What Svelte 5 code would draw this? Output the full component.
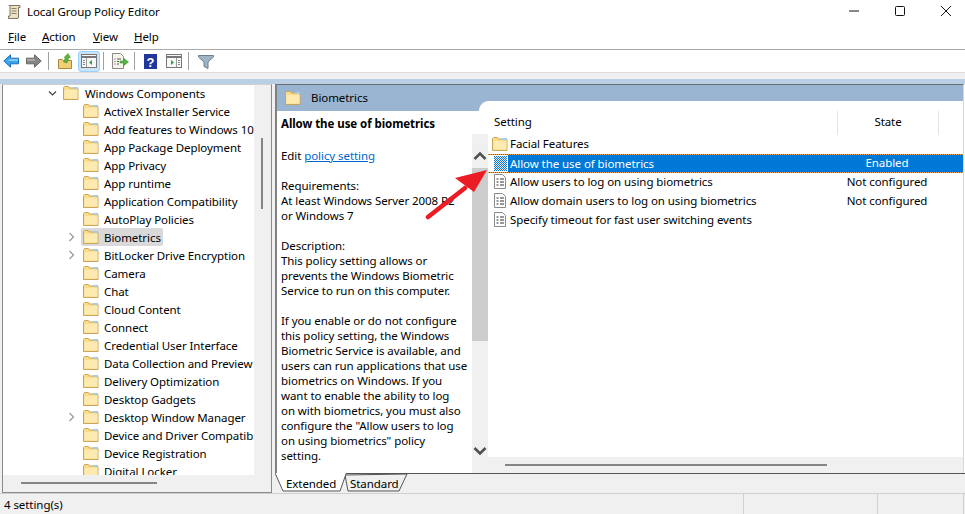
<script>
  const tree = [
    ['ActiveX Installer Service'], ['Add features to Windows 10'], ['App Package Deployment'], ['App Privacy'],
    ['App runtime'], ['Application Compatibility'], ['AutoPlay Policies'], ['Biometrics', true, true],
    ['BitLocker Drive Encryption', true], ['Camera'], ['Chat'], ['Cloud Content'], ['Connect'],
    ['Credential User Interface'], ['Data Collection and Preview'], ['Delivery Optimization'], ['Desktop Gadgets'],
    ['Desktop Window Manager', true], ['Device and Driver Compatib'], ['Device Registration'], ['Digital Locker']
  ];
  const desc = [
    'This policy setting allows or', 'prevents the Windows Biometric', 'Service to run on this computer.'
  ];
  const desc2 = [
    'If you enable or do not configure', 'this policy setting, the Windows', 'Biometric Service is available, and',
    'users can run applications that use', 'biometrics on Windows. If you', 'want to enable the ability to log',
    'on with biometrics, you must also', 'configure the "Allow users to log', 'on using biometrics" policy', 'setting.'
  ];
  const rows = [
    ['Allow users to log on using biometrics', 'Not configured'],
    ['Allow domain users to log on using biometrics', 'Not configured'],
    ['Specify timeout for fast user switching events', '']
  ];
</script>

{#snippet folder()}
  <svg class="folder" width="16" height="14" viewBox="0 0 16 14">
    <path d="M.5 13.500V1.500l1-1h4l1 1.500h8l.5 1v10.500z" fill="#f9dc8c" stroke="#c9a55a"/>
    <path d="M1.500 4h13v8.500h-13z" fill="#fdeab0"/>
    <path d="M10 1h5v2h-5z" fill="#a6cbe8"/>
  </svg>
{/snippet}

{#snippet doc()}
  <svg class="doc" width="14" height="15" viewBox="0 0 14 15">
    <path d="M1.500.5h8l3 3v11h-11z" fill="#fff" stroke="#8a8a8a"/>
    <path d="M3.500 5h2M7 5h4M3.500 8h2M7 8h4M3.500 11h2M7 11h4" stroke="#333" stroke-width="1.200"/>
  </svg>
{/snippet}

<div class="app">
  <header class="title">
    <svg class="appicon" width="16" height="16" viewBox="0 0 16 16">
      <path d="M3 1.500h11v2h-1.500V13a1.500 1.500 0 0 1-1.500 1.500H2.500V12H4V2.500z" fill="#ece3c4" stroke="#7e7660"/>
      <path d="M5.500 4.500h5M5.500 7h5M5.500 9.500h5" stroke="#8a8168"/>
    </svg>
    <span class="title-text">Local Group Policy Editor</span>
    <div class="controls">
      <svg width="12" height="12" viewBox="0 0 12 12"><path d="M1 6h10" stroke="#111"/></svg>
      <svg width="12" height="12" viewBox="0 0 12 12"><rect x="1.500" y="1.500" width="9" height="9" rx="1" fill="none" stroke="#111"/></svg>
      <svg width="12" height="12" viewBox="0 0 12 12"><path d="M1 1l10 10M11 1L1 11" stroke="#111"/></svg>
    </div>
  </header>

  <nav class="menu">
    <span class="m1"><u>F</u>ile</span><span class="m2"><u>A</u>ction</span><span class="m3"><u>V</u>iew</span><span class="m4"><u>H</u>elp</span>
  </nav>

  <div class="toolbar">
    <svg class="tb" style="margin-left:3px" width="16" height="14" viewBox="0 0 16 14"><path d="M7.500.8L.8 7l6.700 6.200V9.800H15.500V4.200H7.500z" fill="#38a4ee" stroke="#1b70b8"/><path d="M7 5.200h8v1.500H5z" fill="#9ad6fb"/></svg>
    <svg class="tb" style="margin-left:7px" width="16" height="14" viewBox="0 0 16 14"><path d="M8.500.8L15.200 7l-6.700 6.200V9.800H.5V4.200h8z" fill="#858585" stroke="#666"/><path d="M1 5.200h8v1.500H1z" fill="#b4b4b4"/></svg>
    <i class="sep" style="margin:0 9px 0 6px"></i>
    <svg class="tb" width="15" height="16" viewBox="0 0 15 16"><path d="M.5 15.500v-9h4l1 1h8v8z" fill="#f0cf77" stroke="#a88a3e"/><path d="M5.500 9l2-4.500H6L10 .5l2.500 4H11L9 10z" fill="#5fb33c" stroke="#3d8a26" stroke-width=".5"/></svg>
    <span class="tb-on" style="margin-left:5px">
      <svg width="16" height="14" viewBox="0 0 16 14"><rect x=".5" y=".5" width="15" height="13" fill="#f7f7f7" stroke="#777"/><path d="M.5 3h15" stroke="#777" stroke-width="2"/><path d="M5.500 4v9" stroke="#999"/><path d="M2 6.500h2M2 8.500h2M2 10.500h2" stroke="#888"/><path d="M11 6v5L8 8.500z" fill="#2f9e44"/></svg>
    </span>
    <i class="sep" style="margin:0 8px 0 3px"></i>
    <svg class="tb" width="17" height="16" viewBox="0 0 17 16"><path d="M.5.500h8l3 3v12H.5z" fill="#f6f3e8" stroke="#8a8a8a"/><path d="M2.500 6h1M5 6h4M2.500 8.500h1M5 8.500h2M2.500 11h1M5 11h2" stroke="#555"/><path d="M8 8h4V5.500L16.500 9 12 12.500V10H8z" fill="#55b548" stroke="#3d8a26" stroke-width=".5"/></svg>
    <i class="sep" style="margin:0 9px 0 5px"></i>
    <svg class="tb" width="13" height="15" viewBox="0 0 13 15"><rect width="13" height="15" fill="#20379c"/><text x="6.500" y="12.500" text-anchor="middle" fill="#fff" font-family="Liberation Sans" font-weight="700" font-size="13">?</text></svg>
    <svg class="tb" style="margin-left:9px" width="16" height="14" viewBox="0 0 16 14"><rect x=".5" y=".5" width="15" height="13" fill="#f7f7f7" stroke="#777"/><path d="M.5 3h15" stroke="#777" stroke-width="2"/><path d="M10.500 4v9" stroke="#999"/><path d="M12 6.500h2M12 8.500h2M12 10.500h2" stroke="#888"/><path d="M5 6v5l3-2.500z" fill="#2f9e44"/></svg>
    <i class="sep" style="margin:0 9px 0 6px"></i>
    <svg class="tb" width="16" height="15" viewBox="0 0 16 15"><path d="M.5 1.500h15v1.500L10 8v6.500l-4-2V8L.5 3z" fill="#9fb4c4" stroke="#6b7f8f"/></svg>
  </div>

  <main class="main">
    <div class="strip"></div>
    <div class="panes">
      <section class="tree-pane">
        <div class="tree-body">
          <div class="tree">
            <div class="tree-row root">
              <svg class="chev" width="9" height="9" viewBox="0 0 9 9"><path d="M1 2.500l3.500 3.500L8 2.500" fill="none" stroke="#444" stroke-width="1.200"/></svg>
              {@render folder()}
              <span class="lbl">Windows Components</span>
            </div>
            {#each tree as [name, expand, sel]}
              <div class="tree-row child">
                <span class="exp">
                  {#if expand}<svg width="9" height="10" viewBox="0 0 9 10"><path d="M2.500 1l4 4-4 4" fill="none" stroke="#999" stroke-width="1.200"/></svg>{/if}
                </span>
                <span class="item" class:sel>{@render folder()}<span class="lbl">{name}</span></span>
              </div>
            {/each}
          </div>
          <div class="vbar"><i></i></div>
        </div>
        <div class="hbar"><i></i></div>
      </section>

      <section class="detail">
        <div class="det-wrap">
          <div class="det-tab">
            {@render folder()}
            <span class="det-name">Biometrics</span>
          </div>
          <div class="corner"></div>
          <div class="det-top"></div>
          <div class="det-body">
            <div class="desc">
              <p class="h">Allow the use of biometrics</p>
              <p class="edit">Edit <a href="#x">policy setting </a></p>
              <p>Requirements:<br/>At least Windows Server 2008 R2<br/>or Windows 7</p>
              <p>Description:<br/>{#each desc as l}{l}<br/>{/each}</p>
              <p>{#each desc2 as l}{l}<br/>{/each}</p>
            </div>
            <div class="dbar">
              <svg width="14" height="10" viewBox="0 0 14 10"><path d="M1.500 8L7 2.500 12.500 8" fill="none" stroke="#505050" stroke-width="2.600"/></svg>
              <i></i>
              <svg width="14" height="10" viewBox="0 0 14 10"><path d="M1.500 2L7 7.500 12.500 2" fill="none" stroke="#505050" stroke-width="2.600"/></svg>
            </div>
            <div class="list">
              <div class="list-scroll">
                <div class="cols"><span class="c1">Setting</span><span class="c2">State</span></div>
                <div class="row">{@render folder()}<span class="name">Facial Features</span></div>
                <div class="row selrow">
                  <svg class="doc" width="14" height="15" viewBox="0 0 14 15">
                    <defs><pattern id="d" width="2" height="2" patternUnits="userSpaceOnUse"><rect width="2" height="2" fill="#1274c8"/><rect width="1" height="1" fill="#e4f0fa"/><rect x="1" y="1" width="1" height="1" fill="#e4f0fa"/></pattern></defs>
                    <rect x="1" width="13" height="15" fill="url(#d)"/>
                  </svg>
                  <span class="name s">Allow the use of biometrics</span><span class="state s">Enabled</span>
                </div>
                {#each rows as [n, st]}
                  <div class="row">{@render doc()}<span class="name">{n}</span><span class="state">{st}</span></div>
                {/each}
              </div>
              <div class="lbar"><i></i></div>
            </div>
          </div>
        </div>
        <div class="tabs">
          <svg class="tabshape" width="136" height="20" viewBox="0 0 136 20">
            <path d="M132 1L124 18H73L70 2z" fill="#f0f0f0" stroke="#555"/>
            <path d="M-1 0H71L65 18H8z" fill="#fff"/>
            <path d="M0 0l8 18h57l6-17" fill="none" stroke="#555"/>
          </svg>
          <span class="t1">Extended</span><span class="t2">Standard</span>
        </div>
      </section>
    </div>
    <svg class="arrow" width="70" height="56" viewBox="0 0 70 56">
      <path d="M3 51L40 22" stroke="#ec1c24" stroke-width="4.500" stroke-linecap="round"/>
      <path d="M62 4L30 12l19 14z" fill="#ec1c24"/>
    </svg>
  </main>

  <footer class="status">
    <span class="s1">4 setting(s)</span><span class="s2"></span><span class="s3"></span>
  </footer>
</div>

<style>
  :global(body) { margin: 0; background: #fff; }
  .app {
    position: relative; width: 965px; height: 514px; overflow: hidden; display: flex; flex-direction: column;
    background: #fff; color: #000; font: 11.500px/15px "Noto Sans", "Open Sans", sans-serif; letter-spacing: -.07px;
  }
  .title { height: 23px; padding: 0 0 2px 6px; display: flex; align-items: center; }
  .title-text { margin-left: 5px; }
  .controls { margin-left: auto; display: flex; gap: 34px; padding-right: 13px; margin-top: -2px; }
  .menu { height: 22px; padding-bottom: 2px; display: flex; align-items: center; border-bottom: 1px solid #a9a9a9; }
  .m1 { margin-left: 8px; width: 34px; }
  .m2 { width: 51px; }
  .m3 { width: 41px; }
  .toolbar { height: 22px; display: flex; align-items: center; border-bottom: 1px solid #dcdcdc; }
  .tb { flex: none; }
  .sep { width: 1px; height: 18px; background: #a0a0a0; flex: none; }
  .tb-on { width: 22px; height: 21px; display: flex; align-items: center; justify-content: center; background: #cce4f7; border: 1px solid #99d1ff; border-radius: 3px; box-sizing: border-box; flex: none; }

  .main { position: relative; flex: 1; min-height: 0; background: #f0f0f0; padding-top: 6px; display: flex; flex-direction: column; border-bottom: 1px solid #d0d0d0; }
  .strip { height: 5px; background: #b8cfe5; flex: none; }
  .panes { flex: 1; min-height: 0; display: flex; gap: 3px; padding-left: 2px; }

  .tree-pane { width: 270px; border: 1px solid #8a8a8a; border-top-color: #d0d0d0; box-sizing: border-box; display: flex; flex-direction: column; background: #f0f0f0; }
  .tree-body { flex: 1; min-height: 0; display: flex; }
  .tree { flex: 1; min-width: 0; background: #fff; overflow: hidden; }
  .tree-row { height: 18px; display: flex; align-items: center; }
  .root { padding-left: 45px; margin-top: -1px; }
  .chev { margin-right: 6px; }
  .root .lbl { margin-left: 6px; }
  .child { padding-left: 64px; }
  .exp { width: 14px; flex: none; display: flex; }
  .item { display: flex; align-items: center; height: 18px; padding: 0 2px; border-radius: 2px; white-space: nowrap; }
  .item .lbl { margin-left: 5px; }
  .item.sel { background: #d9d9d9; }
  .lbl { white-space: nowrap; }
  .folder { flex: none; }
  .vbar { width: 17px; flex: none; }
  .vbar i { display: block; width: 2px; height: 71px; background: #858585; margin: 53px 0 0 7px; }
  .hbar { height: 17px; flex: none; }
  .hbar i { display: block; width: 136px; height: 2px; margin: 7px 0 0 18px; background: #858585; }

  .detail { flex: 1; min-width: 0; display: flex; flex-direction: column; background: #fff; }
  .det-wrap { position: relative; flex: 1; min-height: 0; background: #fff; display: flex; flex-direction: column; border-top: 1px solid #6f6f6f; border-left: 2px solid #808080; border-right: 1px solid #d8d8d8; margin-right: 1px; }
  .det-tab { position: absolute; z-index: 1; left: 0; top: 0; width: 201px; height: 26px; background: #9ab5d1; display: flex; align-items: flex-start; padding: 6px 0 0 8px; box-sizing: border-box; gap: 10px; }
  .det-name { margin-top: -1px; }
  .corner { position: absolute; z-index: 1; left: 201px; top: 16px; width: 11px; height: 10px; background: radial-gradient(circle at 100% 100%, #fff 9.500px, #9ab5d1 10.500px); }
  .det-top { height: 16px; background: #9ab5d1; flex: none; }
  .det-body { flex: 1; min-height: 0; display: flex; background: #fff; }
  .desc { width: 195px; padding: 15px 0 0 4px; box-sizing: border-box; flex: none; white-space: nowrap; overflow: hidden; }
  .desc p { margin: 0 0 15px; }
  .desc .h { font-weight: 700; margin-bottom: 17px; }
  .desc a { color: #0066cc; white-space: pre; }
  .dbar { width: 16px; flex: none; background: #f0f0f0; display: flex; flex-direction: column; align-items: center; padding-top: 17px; box-sizing: border-box; margin-top: 33px; }
  .dbar i { display: block; align-self: stretch; height: 173px; margin-top: 7px; background: #cdcdcd; }
  .dbar svg:last-child { margin-top: auto; margin-bottom: 17px; }
  .list { flex: 1; min-width: 0; display: flex; flex-direction: column; }
  .list-scroll { flex: 1; min-height: 0; padding-top: 10px; }
  .cols { height: 24px; display: flex; align-items: center; }
  .c1 { width: 350px; padding-left: 6px; box-sizing: border-box; border-right: 1px solid #e5e5e5; height: 24px; line-height: 22px; }
  .c2 { width: 100px; text-align: center; border-right: 1px solid #e5e5e5; height: 24px; line-height: 22px; }
  .row { position: relative; height: 19px; display: flex; align-items: center; padding: 0 0 2px 5px; box-sizing: border-box; }
  .row .folder { margin: 0 -1px 0 -1px; }
  .row .name { margin-left: 1px; padding: 0 2px; white-space: nowrap; }
  .row .state { position: absolute; left: 349px; top: 1px; width: 100px; text-align: center; }
  .selrow { background: linear-gradient(#fff, #fff) 0 0 / 20px 100% no-repeat, #0078d7; border-top: 1px dotted #e8a35c; border-bottom: 1px dotted #e8a35c; padding-bottom: 1px; }
  .selrow .state { top: 0; }
  .s { color: #fff; }
  .lbar { height: 16px; flex: none; background: #f0f0f0; }
  .lbar i { display: block; width: 322px; height: 2px; margin: 7px 0 0 17px; background: #858585; }

  .tabs { position: relative; height: 19px; flex: none; border-top: 1px solid #555; background: #f0f0f0; }
  .tabshape { position: absolute; left: 0; top: -1px; }
  .t1 { position: absolute; left: 11px; top: 2px; }
  .t2 { position: absolute; left: 75px; top: 2px; }

  .arrow { position: absolute; left: 425px; top: 93px; }

  .status { height: 20px; display: flex; background: #f0f0f0; align-items: center; }
  .s1 { width: 744px; padding-left: 4px; box-sizing: border-box; border-right: 1px solid #d0d0d0; height: 20px; line-height: 22px; }
  .s2 { width: 133px; border-right: 1px solid #d0d0d0; height: 20px; }
  .s3 { width: 85px; border-right: 1px solid #d0d0d0; height: 20px; }
</style>
